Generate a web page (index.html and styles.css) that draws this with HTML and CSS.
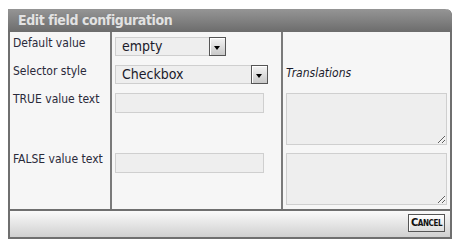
FILE: index.html
```html
<!DOCTYPE html>
<html lang="en">
	<head>
		<meta charset="UTF-8">
		<title>Edit field configuration</title>
		<link rel="stylesheet" href="styles.css">
	</head>
	<body>
		<div class="dialog">
			<div class="dialog-title">Edit field configuration</div>
			<div class="dialog-body">
				<div class="cell label row-a">Default value</div>
				<div class="cell mid row-a">
					<div class="select short">
						<span class="select-text">empty</span>
						<span class="select-arrow"></span>
					</div>
				</div>
				<div class="cell right row-a"></div>

				<div class="cell label row-b">Selector style</div>
				<div class="cell mid row-b">
					<div class="select long">
						<span class="select-text">Checkbox</span>
						<span class="select-arrow"></span>
					</div>
				</div>
				<div class="cell right row-b"><em class="translations">Translations</em></div>

				<div class="cell label row-c">TRUE value text</div>
				<div class="cell mid row-c"><input type="text" class="text-input"></div>
				<div class="cell right row-c"><textarea class="trans-box"></textarea></div>

				<div class="cell label row-d">FALSE value text</div>
				<div class="cell mid row-d"><input type="text" class="text-input"></div>
				<div class="cell right row-d"><textarea class="trans-box"></textarea></div>
			</div>
			<div class="dialog-footer">
				<button class="cancel">Cancel</button>
			</div>
		</div>
	</body>
</html>
```

FILE: styles.css
```css
html, body {
	margin: 0;
	padding: 0;
	background: #ffffff;
	font-family: "DejaVu Sans Condensed", "DejaVu Sans", sans-serif;
	font-size: 12px;
	color: #2a2a3a;
}

.dialog {
	margin: 9px 0 0 8px;
	width: 444px;
	box-sizing: border-box;
	border: 2px solid #6f6f6f;
	border-top: 0;
	border-radius: 0 6px 0 0;
	background: #f6f6f6;
}

.dialog-title {
	height: 23px;
	box-sizing: border-box;
	margin: 0 -2px;
	padding: 3px 0 0 10px;
	border-radius: 0 7px 0 0;
	background: linear-gradient(#959595, #858585 40%, #6c6c6c);
	color: #e2e2e2;
	font-size: 14px;
	font-weight: bold;
	letter-spacing: -0.4px;
	text-shadow: 0 0 1px #777;
}

.dialog-body {
	display: grid;
	grid-template-columns: 102px 171px 1fr;
	grid-template-rows: 28px 28px 60px 61px;
}

.cell {
	box-sizing: border-box;
}

.label {
	padding: 4px 0 0 3px;
	border-right: 2px solid #7a7a7a;
	line-height: 14px;
	white-space: nowrap;
}

.mid {
	padding: 5px 0 0 3px;
	border-right: 2px solid #7a7a7a;
}

.right {
	padding: 5px 0 0 3px;
}

.select {
	display: flex;
	height: 19px;
	box-sizing: border-box;
}

.select.short { width: 111px; }
.select.long { width: 153px; }

.select-text {
	flex: 1;
	border: 1px solid #cfcfcf;
	border-right: 0;
	background: #eeeeee;
	padding-left: 6px;
	font-size: 14px;
	line-height: 17px;
	color: #1a1a2a;
}

.select-arrow {
	width: 17px;
	box-sizing: border-box;
	border: 1px solid #555555;
	box-shadow: inset 1px 1px 0 #ffffff;
	background: linear-gradient(#f4f4f4, #c8c8c8);
	position: relative;
}

.select-arrow::after {
	content: "";
	position: absolute;
	left: 4px;
	top: 8px;
	border-left: 3.5px solid transparent;
	border-right: 3.5px solid transparent;
	border-top: 4px solid #000;
}

.translations {
	display: block;
	margin-top: 1px;
	line-height: 14px;
	color: #1a1a2a;
}

.text-input {
	display: block;
	width: 149px;
	height: 20px;
	box-sizing: border-box;
	margin: 0;
	border: 1px solid #cfcfcf;
	background: #eeeeee;
}

.trans-box {
	display: block;
	width: 161px;
	height: 52px;
	box-sizing: border-box;
	margin: 0;
	border: 1px solid #cfcfcf;
	background: #eeeeee;
	resize: both;
}

.dialog-footer {
	height: 28px;
	box-sizing: border-box;
	border-top: 2px solid #6f6f6f;
	background: linear-gradient(#fafafa, #d0d0d0);
	display: flex;
	justify-content: flex-end;
	align-items: flex-start;
	padding: 3px 5px 0 0;
}

.cancel {
	all: unset;
	width: 37px;
	height: 18px;
	box-sizing: border-box;
	border: 1px solid #555555;
	box-shadow: inset 1px 1px 0 #ffffff;
	background: linear-gradient(#ffffff, #dcdcdc);
	font-family: "DejaVu Sans Condensed", "DejaVu Sans", sans-serif;
	font-size: 11px;
	font-weight: bold;
	font-variant: small-caps;
	letter-spacing: -0.4px;
	text-align: center;
	line-height: 16px;
	color: #111;
	cursor: pointer;
}
```
